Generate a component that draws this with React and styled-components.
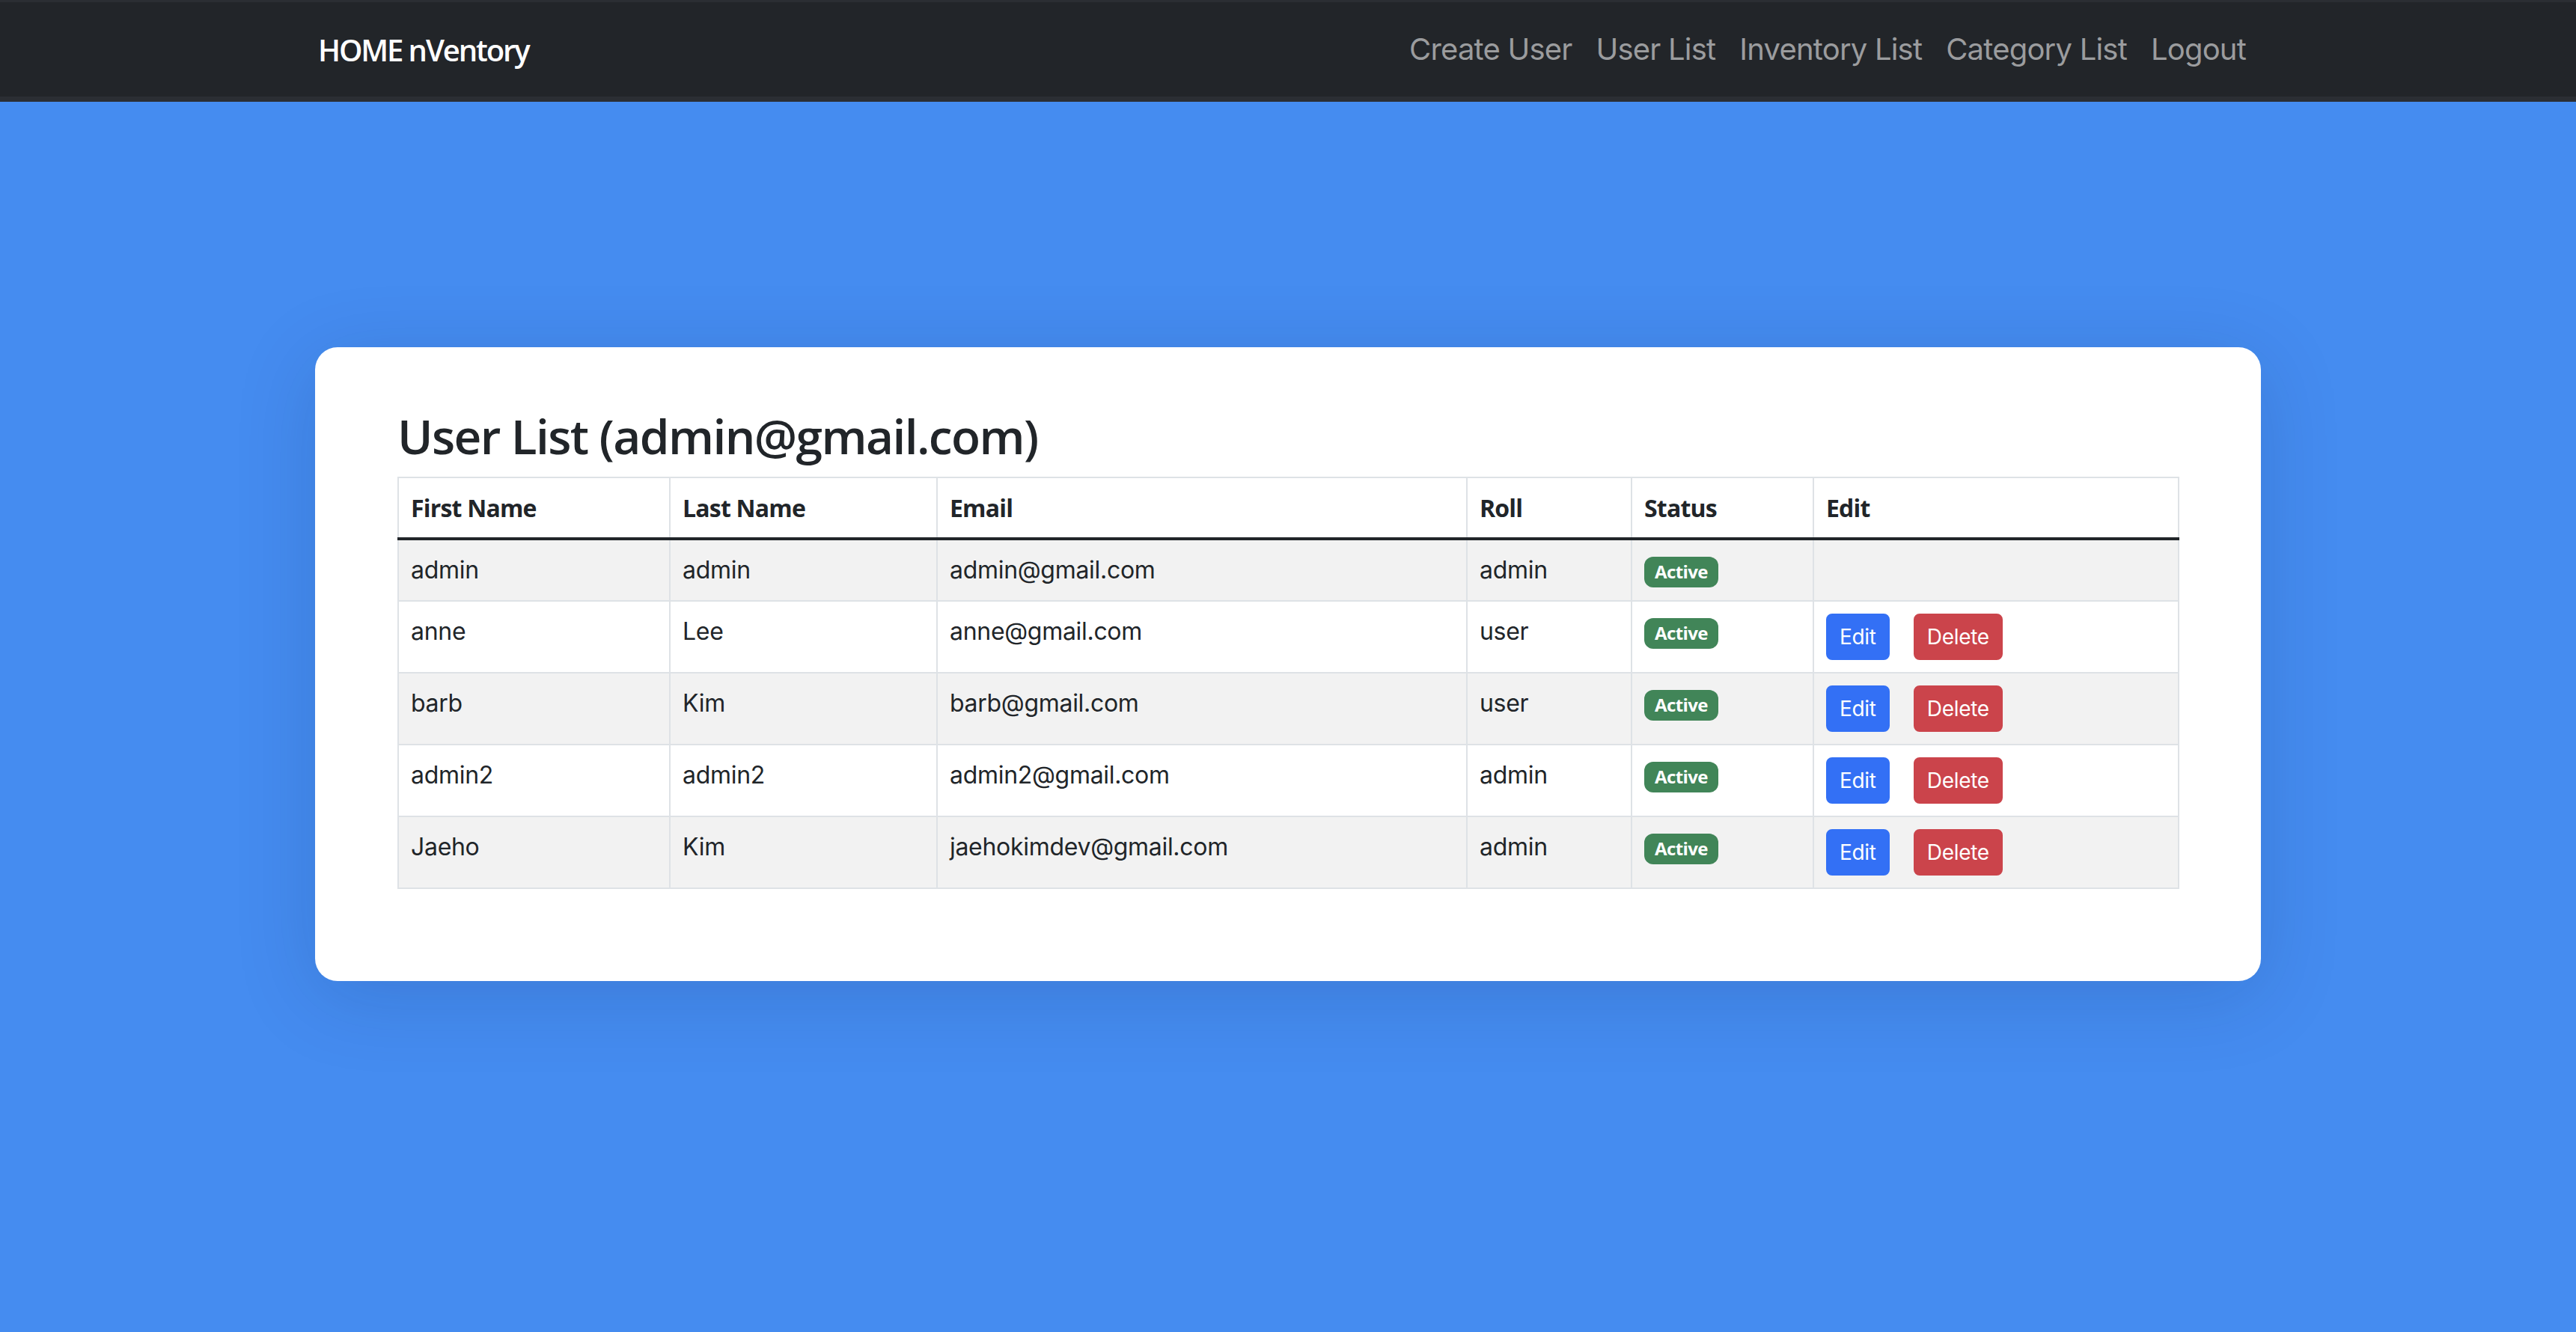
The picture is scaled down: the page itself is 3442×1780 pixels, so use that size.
import styled, { createGlobalStyle } from 'styled-components';

const GlobalStyle = createGlobalStyle`
  html, body {
    margin: 0;
    padding: 0;
  }
  body {
    min-height: 1780px;
    background: #458cf0;
    font-family: Inter, "Noto Sans", sans-serif;
    color: #212529;
  }
`;

const Navbar = styled.nav`
  height: 126px;
  background: #222529;
  border-top: 3px solid #2b2e33;
  border-bottom: 7px solid #2b2e33;
`;

const NavInner = styled.div`
  width: 2592px;
  height: 100%;
  margin: 0 auto;
  display: flex;
  align-items: center;
  justify-content: space-between;
`;

const Brand = styled.a`
  font-family: "Open Sans", "Noto Sans", sans-serif;
  font-weight: 600;
  font-size: 40px;
  letter-spacing: -2.1px;
  color: #fff;
  text-decoration: none;
`;

const NavLinks = styled.ul`
  display: flex;
  margin: 0;
  padding: 0;
  list-style: none;
`;

const NavLink = styled.li`
  padding: 0 16px;
  font-size: 40px;
  line-height: 60px;
  letter-spacing: -0.8px;
  color: #9b9c9e;
  cursor: pointer;
`;

const Main = styled.main`
  padding-top: 328px;
`;

const Card = styled.section`
  width: 2600px;
  margin: 0 auto;
  box-sizing: border-box;
  padding: 80px 111px 123px 110px;
  background: #fff;
  border-radius: 30px;
  box-shadow: 0 20px 110px rgba(10, 30, 80, 0.16);
`;

const Title = styled.h2`
  margin: 0 0 16px;
  font-family: "Open Sans", "Noto Sans", sans-serif;
  font-weight: 600;
  font-size: 64px;
  line-height: 77px;
  letter-spacing: -1.6px;
`;

const Table = styled.table`
  width: 100%;
  border-collapse: collapse;
  table-layout: fixed;
  font-size: 32px;
  line-height: 48px;
`;

const Th = styled.th`
  padding: 16px 16px 15px;
  border: 2px solid #dee2e6;
  border-bottom: 4px solid #212529;
  text-align: left;
  vertical-align: top;
  font-family: "Open Sans", "Noto Sans", sans-serif;
  font-weight: 700;
  letter-spacing: -0.8px;
`;

const Row = styled.tr`
  background: ${p => (p.$striped ? '#f2f2f2' : '#fff')};
`;

const Td = styled.td`
  padding: 16px;
  border: 2px solid #dee2e6;
  vertical-align: top;
  letter-spacing: -0.3px;
`;

const Badge = styled.span`
  display: inline-block;
  padding: 8px 14px 9px;
  font-family: "Open Sans", "Noto Sans", sans-serif;
  font-size: 24px;
  font-weight: 700;
  line-height: 24px;
  letter-spacing: -0.6px;
  color: #fff;
  background: #418558;
  border-radius: 12px;
  vertical-align: middle;
`;

const Actions = styled.div`
  display: flex;
  gap: 32px;
`;

const Button = styled.button`
  height: 62px;
  padding: 0 16px;
  font-family: Inter, "Noto Sans", sans-serif;
  font-size: 28px;
  letter-spacing: -0.3px;
  color: #fff;
  background: ${p => (p.$variant === 'danger' ? '#cb444b' : '#3370f5')};
  border: 2px solid ${p => (p.$variant === 'danger' ? '#cb444b' : '#3370f5')};
  border-radius: 8px;
  cursor: pointer;
`;

const columns = [
  { label: 'First Name', width: 363 },
  { label: 'Last Name', width: 357 },
  { label: 'Email', width: 708 },
  { label: 'Roll', width: 220 },
  { label: 'Status', width: 243 },
  { label: 'Edit', width: 488 },
];

const users = [
  { first: 'admin', last: 'admin', email: 'admin@gmail.com', roll: 'admin', self: true },
  { first: 'anne', last: 'Lee', email: 'anne@gmail.com', roll: 'user' },
  { first: 'barb', last: 'Kim', email: 'barb@gmail.com', roll: 'user' },
  { first: 'admin2', last: 'admin2', email: 'admin2@gmail.com', roll: 'admin' },
  { first: 'Jaeho', last: 'Kim', email: 'jaehokimdev@gmail.com', roll: 'admin' },
];

export default function App() {
  return (
    <>
      <GlobalStyle />
      <Navbar>
        <NavInner>
          <Brand href="#">HOME nVentory</Brand>
          <NavLinks>
            <NavLink>Create User</NavLink>
            <NavLink>User List</NavLink>
            <NavLink>Inventory List</NavLink>
            <NavLink>Category List</NavLink>
            <NavLink>Logout</NavLink>
          </NavLinks>
        </NavInner>
      </Navbar>
      <Main>
        <Card>
          <Title>User List (admin@gmail.com)</Title>
          <Table>
            <colgroup>
              {columns.map(c => (
                <col key={c.label} style={{ width: c.width }} />
              ))}
            </colgroup>
            <thead>
              <tr>
                {columns.map(c => (
                  <Th key={c.label}>{c.label}</Th>
                ))}
              </tr>
            </thead>
            <tbody>
              {users.map((u, i) => (
                <Row key={u.email} $striped={i % 2 === 0}>
                  <Td>{u.first}</Td>
                  <Td>{u.last}</Td>
                  <Td>{u.email}</Td>
                  <Td>{u.roll}</Td>
                  <Td>
                    <Badge>Active</Badge>
                  </Td>
                  <Td>
                    {!u.self && (
                      <Actions>
                        <Button>Edit</Button>
                        <Button $variant="danger">Delete</Button>
                      </Actions>
                    )}
                  </Td>
                </Row>
              ))}
            </tbody>
          </Table>
        </Card>
      </Main>
    </>
  );
}
